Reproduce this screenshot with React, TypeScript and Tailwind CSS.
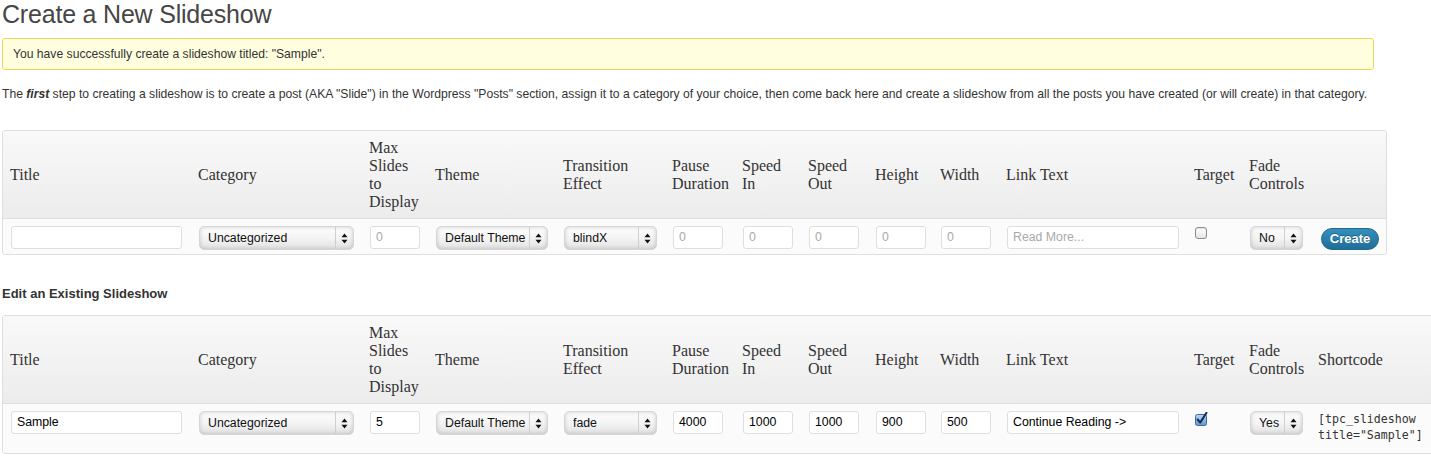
import React from "react";

const sans = "font-['Liberation_Sans',Arial,sans-serif]";
const serif = "font-['Liberation_Serif','Times_New_Roman',serif]";

function TextInput({ value, placeholder, w }: { value?: string; placeholder?: string; w: string }) {
  return (
    <div
      className={`${w} h-[23px] ml-[1px] bg-white border border-[#dfdfdf] rounded-[3px] flex items-center px-[5px] text-[12.3px] ${sans} ${
        value ? "text-[#000]" : "text-[#a9a9a9]"
      } overflow-hidden whitespace-nowrap`}
    >
      {value ?? placeholder}
    </div>
  );
}

function Arrows() {
  return (
    <svg width="7" height="11" viewBox="0 0 7 11">
      <path d="M3.5 0.5 L6.5 4.3 L0.5 4.3 Z" fill="#111" />
      <path d="M3.5 10.5 L6.5 6.7 L0.5 6.7 Z" fill="#111" />
    </svg>
  );
}

function Select({ value, w }: { value: string; w: string }) {
  return (
    <div
      className={`${w} h-[24px] ml-[1px] rounded-[5px] border border-[#d6d6d6] bg-gradient-to-b from-[#fdfdfd] via-[#f4f4f4] to-[#e2e2e2] shadow-[inset_0_0_4px_rgba(0,0,0,0.18)] flex items-center text-[12.3px] text-[#111] ${sans}`}
    >
      <div className="flex-1 pl-[8px] whitespace-nowrap overflow-hidden">{value}</div>
      <div className="w-[18px] h-full border-l border-[#cfcfcf] flex items-center justify-center">
        <Arrows />
      </div>
    </div>
  );
}

function Checkbox({ checked }: { checked?: boolean }) {
  if (checked) {
    return (
      <svg width="13" height="14" viewBox="0 0 13 14" className="ml-[1px]">
        <defs>
          <linearGradient id="cbg" x1="0" y1="0" x2="0" y2="1">
            <stop offset="0" stopColor="#b9d7f5" />
            <stop offset="1" stopColor="#5c98d8" />
          </linearGradient>
        </defs>
        <rect x="0.5" y="2.5" width="11" height="11" rx="2" fill="url(#cbg)" stroke="#3d6aa6" />
        <path d="M2.6 7.5 L5.2 10.6 L11.5 0.8" fill="none" stroke="#1c2b48" strokeWidth="2" strokeLinecap="round" strokeLinejoin="round" />
      </svg>
    );
  }
  return (
    <div className="w-[12px] h-[12px] ml-[1px] rounded-[3px] border border-[#8a8a8a] bg-gradient-to-b from-white to-[#e6e6e6] shadow-[inset_0_1px_1px_rgba(0,0,0,0.1)]" />
  );
}

const headers: { label: React.ReactNode; w: string }[] = [
  { label: "Title", w: "w-[188px]" },
  { label: "Category", w: "w-[171px]" },
  { label: <>Max<br />Slides<br />to<br />Display</>, w: "w-[66px]" },
  { label: "Theme", w: "w-[128px]" },
  { label: <>Transition<br />Effect</>, w: "w-[109px]" },
  { label: <>Pause<br />Duration</>, w: "w-[70px]" },
  { label: <>Speed<br />In</>, w: "w-[66px]" },
  { label: <>Speed<br />Out</>, w: "w-[67px]" },
  { label: "Height", w: "w-[65px]" },
  { label: "Width", w: "w-[66px]" },
  { label: "Link Text", w: "w-[188px]" },
  { label: "Target", w: "w-[55px]" },
  { label: <>Fade<br />Controls</>, w: "w-[69px]" },
];

function HeaderRow({ last }: { last: React.ReactNode }) {
  return (
    <div className="flex h-[88px] bg-gradient-to-b from-[#f9f9f9] to-[#ececec] border-b border-[#dfdfdf] rounded-t-[3px]">
      {headers.map((h, i) => (
        <div
          key={i}
          className={`${h.w} shrink-0 flex items-center pl-[7px] text-[16px] leading-[18px] text-[#333] ${serif}`}
        >
          <div>{h.label}</div>
        </div>
      ))}
      <div className={`flex-1 flex items-center pl-[7px] text-[16px] leading-[18px] text-[#333] ${serif}`}>{last}</div>
    </div>
  );
}

type RowData = {
  title?: string;
  max?: string;
  trans: string;
  pause?: string;
  sin?: string;
  sout?: string;
  h?: string;
  wd?: string;
  link?: string;
  checked?: boolean;
  fade: string;
};

function BodyRow({ d, last, tall }: { d: RowData; last: React.ReactNode; tall?: boolean }) {
  const cell = "shrink-0 pl-[7px]";
  return (
    <div className={`flex bg-[#fbfbfb] rounded-b-[3px] ${tall ? "pt-[7px] pb-[10px]" : "pt-[7px] pb-[4px]"}`}>
      <div className={`w-[188px] ${cell}`}>
        <TextInput w="w-[171px]" value={d.title} />
      </div>
      <div className={`w-[171px] ${cell}`}>
        <Select w="w-[155px]" value="Uncategorized" />
      </div>
      <div className={`w-[66px] ${cell}`}>
        <TextInput w="w-[50px]" value={d.max} placeholder="0" />
      </div>
      <div className={`w-[128px] ${cell}`}>
        <Select w="w-[112px]" value="Default Theme" />
      </div>
      <div className={`w-[109px] ${cell}`}>
        <Select w="w-[93px]" value={d.trans} />
      </div>
      <div className={`w-[70px] ${cell}`}>
        <TextInput w="w-[50px]" value={d.pause} placeholder="0" />
      </div>
      <div className={`w-[66px] ${cell}`}>
        <TextInput w="w-[50px]" value={d.sin} placeholder="0" />
      </div>
      <div className={`w-[67px] ${cell}`}>
        <TextInput w="w-[50px]" value={d.sout} placeholder="0" />
      </div>
      <div className={`w-[65px] ${cell}`}>
        <TextInput w="w-[50px]" value={d.h} placeholder="0" />
      </div>
      <div className={`w-[66px] ${cell}`}>
        <TextInput w="w-[50px]" value={d.wd} placeholder="0" />
      </div>
      <div className={`w-[188px] ${cell}`}>
        <TextInput w="w-[172px]" value={d.link} placeholder="Read More..." />
      </div>
      <div className={`w-[55px] ${cell} pt-[1px]`}>
        <Checkbox checked={d.checked} />
      </div>
      <div className={`w-[69px] ${cell}`}>
        <Select w="w-[53px]" value={d.fade} />
      </div>
      <div className="flex-1 pl-[7px]">{last}</div>
    </div>
  );
}

export default function App() {
  return (
    <div className={`w-[1431px] h-[460px] overflow-hidden bg-white text-[#333] ${sans}`}>
      <div className="pl-[2px] w-[1500px]">
        <h2 className="text-[25px] leading-[29px] text-[#464646] font-normal tracking-[-0.2px]">
          Create a New Slideshow
        </h2>
        <div className="mt-[9px] w-[1372px] h-[32px] bg-[#ffffe0] border border-[#e6db55] rounded-[3px] flex items-center pl-[10px] text-[12.15px] text-[#333]">
          You have successfully create a slideshow titled: "Sample".
        </div>
        <p className="mt-[16px] text-[12.15px] leading-[16px] text-[#333]">
          The <b><i>first</i></b> step to creating a slideshow is to create a post (AKA "Slide") in the Wordpress "Posts" section, assign it to a category of your choice, then come back here and create a slideshow from all the posts you have created (or will create) in that category.
        </p>

        <div className="mt-[28px] w-[1385px] border border-[#dfdfdf] rounded-[3px]">
          <HeaderRow last={null} />
          <BodyRow
            d={{ trans: "blindX", fade: "No" }}
            last={
              <div className="ml-[3px] mt-[2px] w-[58px] h-[22px] rounded-full bg-gradient-to-b from-[#3590c0] to-[#1f6e96] border border-[#1e6a90] flex items-center justify-center text-white text-[13px] font-bold [text-shadow:0_-1px_0_rgba(0,0,0,0.3)]">
                Create
              </div>
            }
          />
        </div>

        <div className="mt-[31px] text-[13px] font-bold text-[#333] leading-[16px]">Edit an Existing Slideshow</div>

        <div className="mt-[13px] w-[1460px] border border-[#dfdfdf] rounded-[3px]">
          <HeaderRow last="Shortcode" />
          <BodyRow
            tall
            d={{
              title: "Sample",
              max: "5",
              trans: "fade",
              pause: "4000",
              sin: "1000",
              sout: "1000",
              h: "900",
              wd: "500",
              link: "Continue Reading ->",
              checked: true,
              fade: "Yes",
            }}
            last={
              <div className="font-['DejaVu_Sans_Mono',monospace] text-[11.6px] leading-[16px] text-[#333] pt-[0px]">
                <div>[tpc_slideshow</div>
                <div>title="Sample"]</div>
              </div>
            }
          />
        </div>
      </div>
    </div>
  );
}
